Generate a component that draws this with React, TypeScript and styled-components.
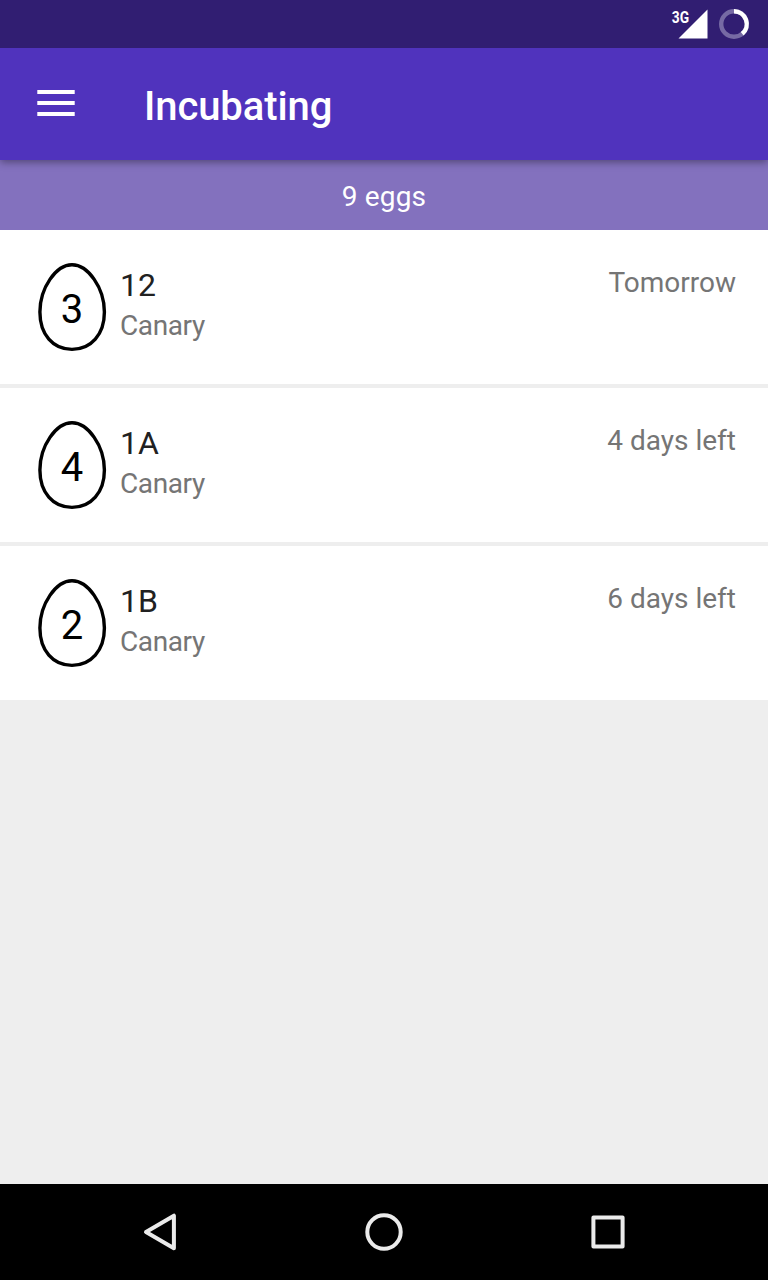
import React from "react";
import styled, { createGlobalStyle } from "styled-components";

const GlobalStyle = createGlobalStyle`
  * { box-sizing: border-box; }
  body { margin: 0; background: #eeeeee; font-family: Roboto, "Liberation Sans", sans-serif; }
`;

const Screen = styled.div`
  display: flex;
  flex-direction: column;
  width: 768px;
  height: 1280px;
  background: #eeeeee;
  overflow: hidden;
`;

const StatusBar = styled.div`
  display: flex;
  justify-content: flex-end;
  flex: 0 0 48px;
  padding-right: 16px;
  background: #311e72;
  z-index: 2;
`;

const AppBar = styled.header`
  display: flex;
  align-items: flex-start;
  flex: 0 0 112px;
  padding: 35px 32px 0;
  background: #5033bd;
  box-shadow: 0 2px 8px rgba(0, 0, 0, 0.4);
  z-index: 1;
`;

const MenuButton = styled.button`
  display: flex;
  width: 48px;
  height: 48px;
  margin-top: -4px;
  padding: 0;
  border: 0;
  background: none;
`;

const Title = styled.h1`
  margin: 0 0 0 64px;
  font-size: 40px;
  font-weight: 500;
  line-height: 47px;
  letter-spacing: -0.1px;
  color: #fff;
`;

const Summary = styled.div`
  flex: 0 0 70px;
  padding-top: 20px;
  font-size: 28px;
  line-height: 33px;
  letter-spacing: 0.15px;
  text-align: center;
  color: #fff;
  background: #8371be;
`;

const List = styled.ul`
  display: flex;
  flex-direction: column;
  flex: 1;
  gap: 4px;
  margin: 0;
  padding: 0;
  list-style: none;
`;

const Row = styled.li`
  display: flex;
  align-items: flex-start;
  height: 154px;
  padding: 32px 32px 0 36px;
  background: #fff;
`;

const Egg = styled.svg`
  display: block;
  width: 72px;
  height: 92px;
  margin-right: 12px;
  font-size: 40px;
`;

const Details = styled.div`
  flex: 1;
  padding-top: 4px;
`;

const Name = styled.div`
  font-size: 32px;
  line-height: 38px;
  color: #212121;
`;

const Species = styled.div`
  margin-top: 5px;
  font-size: 28px;
  line-height: 33px;
  letter-spacing: -0.4px;
  color: #757575;
`;

const Due = styled.div`
  padding-top: 4px;
  font-size: 28px;
  line-height: 33px;
  color: #757575;
`;

const NavBar = styled.nav`
  display: flex;
  justify-content: space-between;
  align-items: center;
  flex: 0 0 96px;
  padding: 0 136px;
  background: #000;
`;

const clutches = [
  { cage: "12", species: "Canary", eggs: 3, due: "Tomorrow" },
  { cage: "1A", species: "Canary", eggs: 4, due: "4 days left" },
  { cage: "1B", species: "Canary", eggs: 2, due: "6 days left" },
];

const EggCount = ({ count }: { count: number }) => (
  <Egg viewBox="0 0 72 92">
    <path
      d="M36 2.8C52 2.8 68.4 26 68.4 50C68.4 72.5 55 87.4 36 87.4C17 87.4 3.9 72.5 3.9 50C3.9 26 20 2.8 36 2.8Z"
      fill="none"
      stroke="#000"
      strokeWidth="3.4"
    />
    <text x="36" y="61" textAnchor="middle">{count}</text>
  </Egg>
);

const NavIcon = ({ children }: { children: React.ReactNode }) => (
  <svg width="48" height="48" viewBox="0 0 48 48" fill="none" stroke="#ebebeb" strokeWidth="4" strokeLinejoin="round">
    {children}
  </svg>
);

export default function App() {
  return (
    <Screen>
      <GlobalStyle />
      <StatusBar>
        <svg width="92" height="48" viewBox="0 0 92 48">
          <text transform="translate(11.8 22.6) scale(0.82 1)" fill="#fff" fontSize="16.8" fontWeight="700">3G</text>
          <path d="M47.5 9.5V38.5H18.5Z" fill="#fff" />
          <circle cx="74" cy="24" r="12.8" fill="none" stroke="#766aa4" strokeWidth="4.4" />
          <path d="M74 11.2A12.8 12.8 0 0 1 82.2 33.8" fill="none" stroke="#fff" strokeWidth="4.4" />
        </svg>
      </StatusBar>
      <AppBar>
        <MenuButton aria-label="Menu">
          <svg width="48" height="48" viewBox="0 0 48 48">
            <path d="M5.3 11h37.4v4H5.3zM5.3 22h37.4v4H5.3zM5.3 33h37.4v4H5.3z" fill="#fff" />
          </svg>
        </MenuButton>
        <Title>Incubating</Title>
      </AppBar>
      <Summary>9 eggs</Summary>
      <List>
        {clutches.map((clutch) => (
          <Row key={clutch.cage}>
            <EggCount count={clutch.eggs} />
            <Details>
              <Name>{clutch.cage}</Name>
              <Species>{clutch.species}</Species>
            </Details>
            <Due>{clutch.due}</Due>
          </Row>
        ))}
      </List>
      <NavBar>
        <NavIcon><path d="M10 24L37.9 7.7V40.3Z" /></NavIcon>
        <NavIcon><circle cx="24" cy="24" r="16.7" /></NavIcon>
        <NavIcon><rect x="9.4" y="9.4" width="29.2" height="29.2" /></NavIcon>
      </NavBar>
    </Screen>
  );
}
